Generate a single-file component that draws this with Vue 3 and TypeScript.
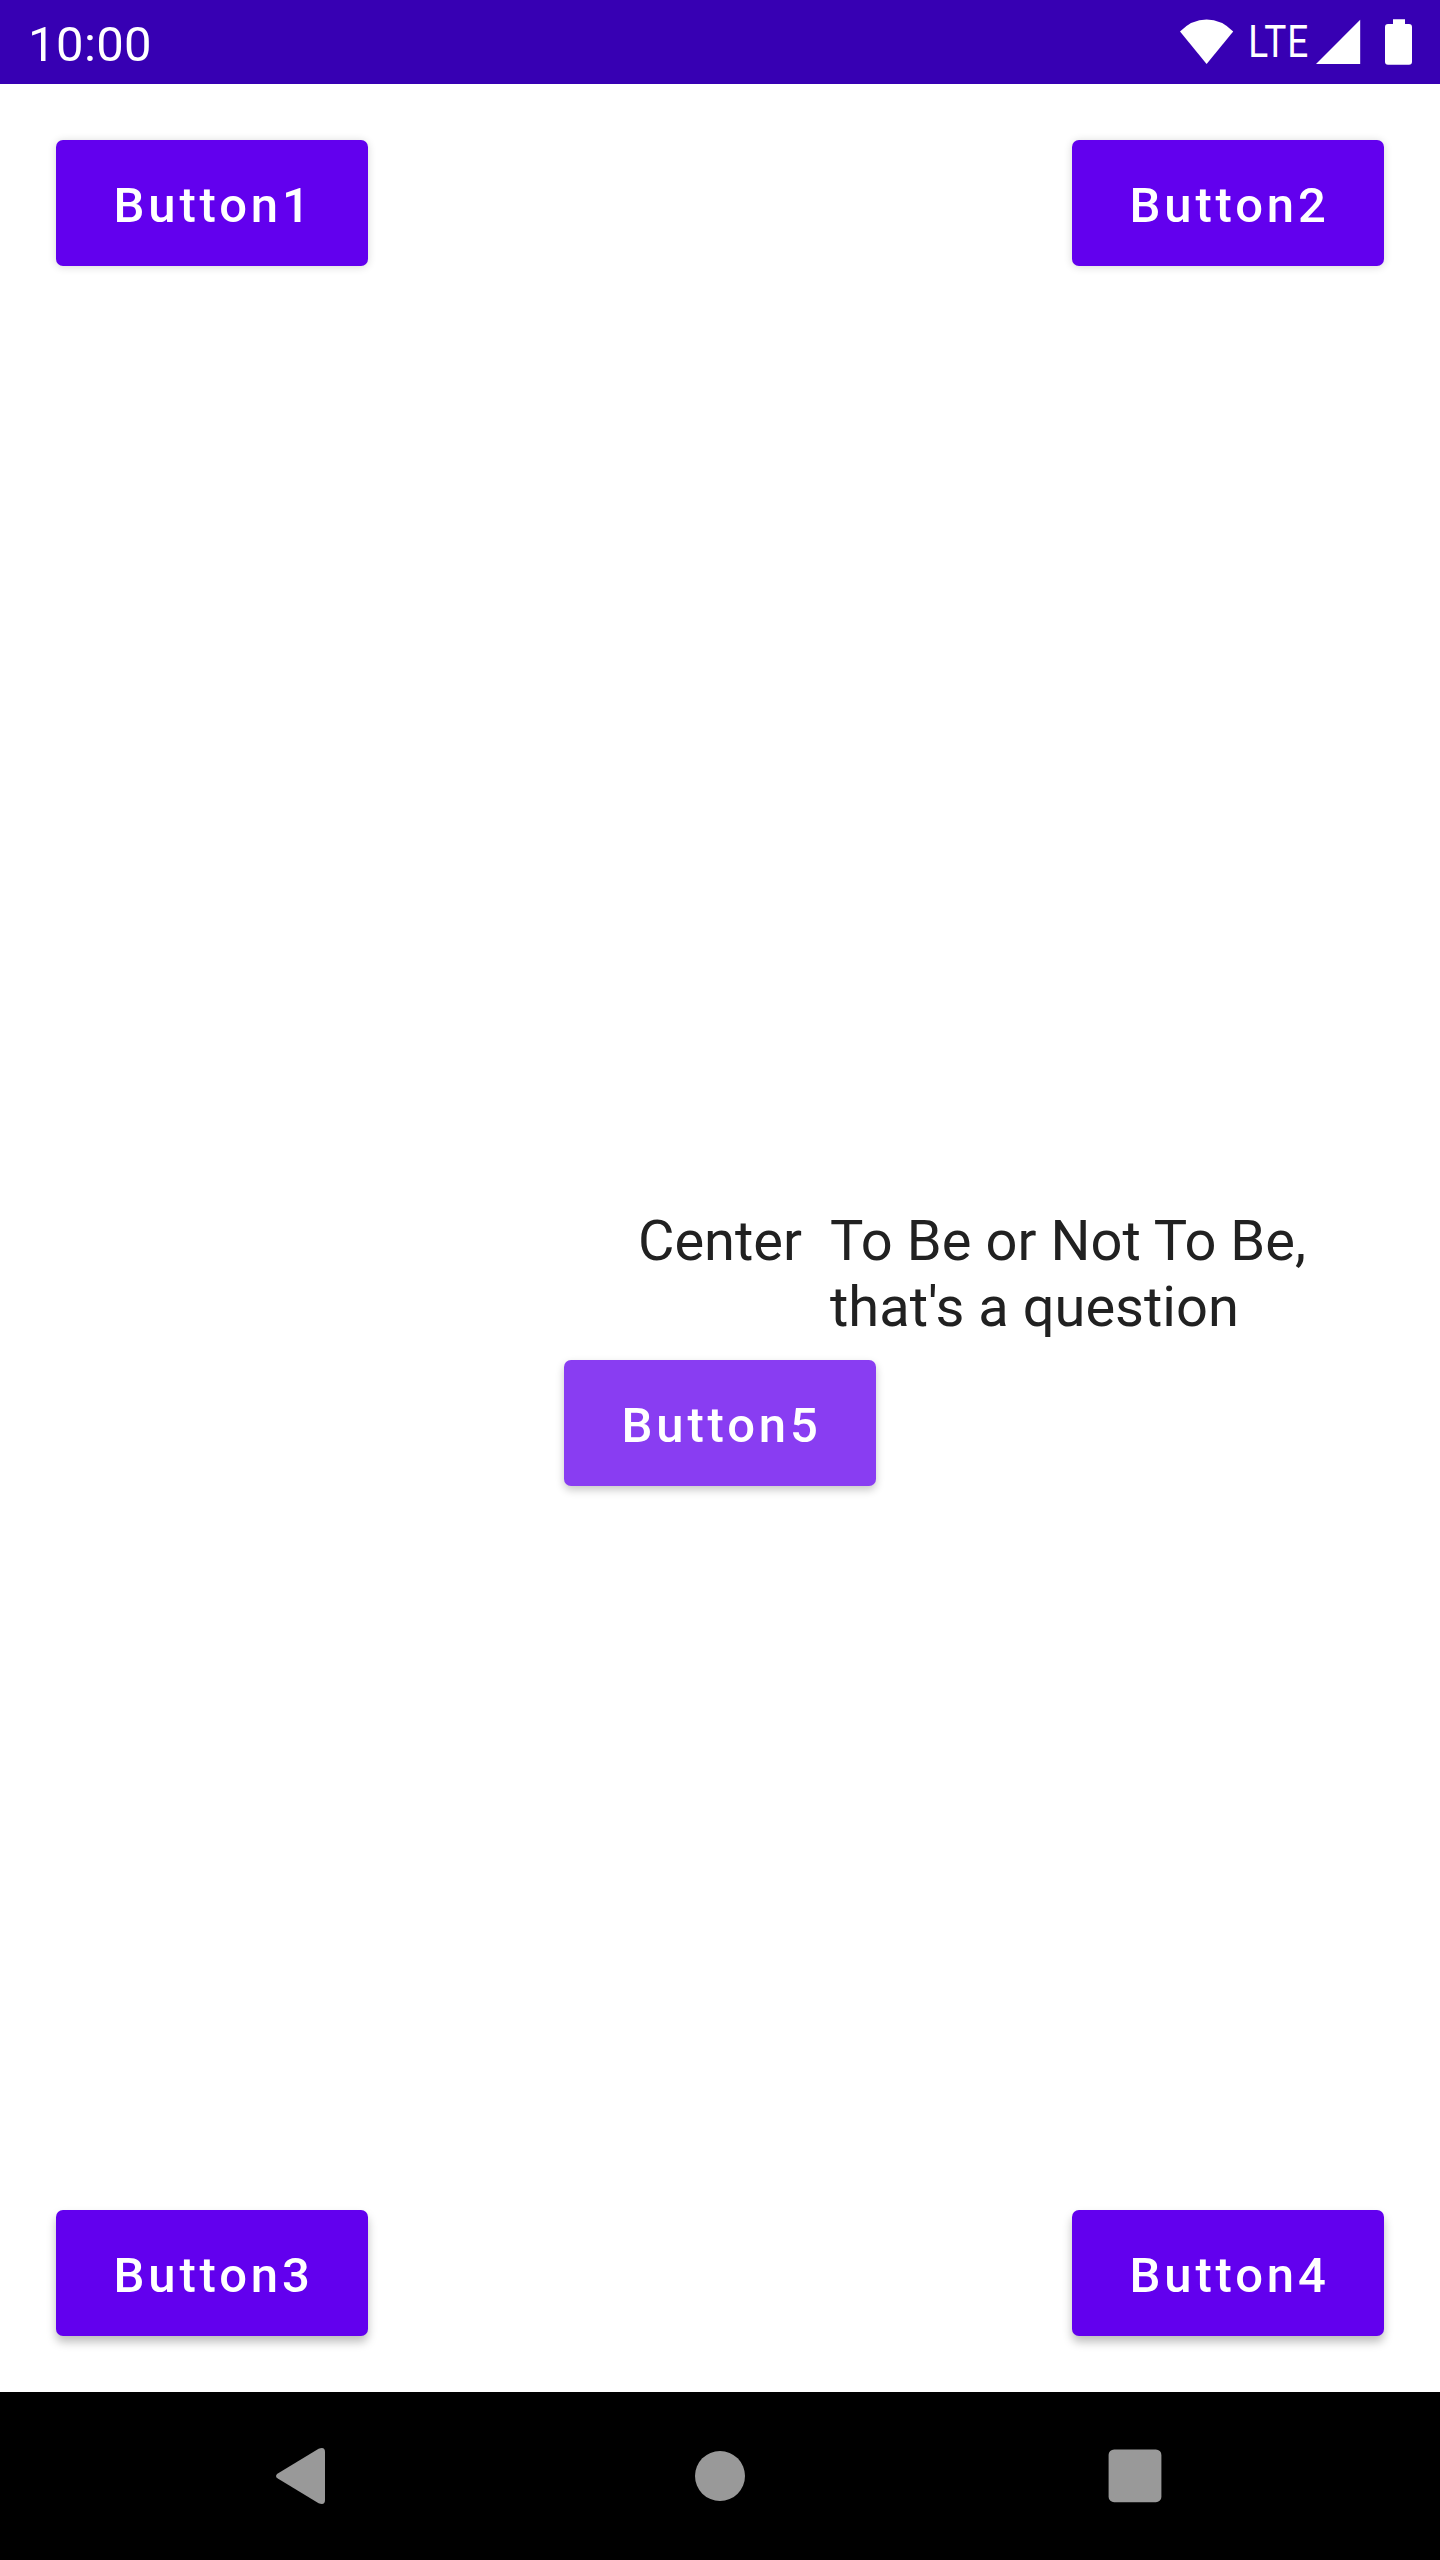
<script setup lang="ts">
interface Action {
  label: string
  tone: string
}

const topActions: Action[] = [
  { label: 'Button1', tone: 'high' },
  { label: 'Button2', tone: 'high' },
]
const bottomActions: Action[] = [
  { label: 'Button3', tone: 'low' },
  { label: 'Button4', tone: 'low' },
]
</script>

<template>
  <div class="screen">
    <header class="status">
      <span class="clock">10:00</span>
      <div class="indicators">
        <svg class="wifi" width="54" height="46" viewBox="0 0 54 46">
          <path d="M0 12.6Q11.8 0.6 26.6 0.6T53.2 12.6L26.6 45Z" fill="#fff" />
        </svg>
        <svg class="lte" width="68" height="65" viewBox="-6 -9 68 65">
          <text transform="translate(0 38) scale(0.84 1)" x="-3.2 15.7 43.2" y="0">LTE</text>
        </svg>
        <svg class="signal" width="45" height="46" viewBox="0 0 45 46">
          <path d="M44.2 0.8V45H0Z" fill="#fff" />
        </svg>
        <svg class="battery" width="27" height="46" viewBox="0 0 27 46">
          <path d="M8 0.3H20V5H24Q27 5 27 8V42.7Q27 45.7 24 45.7H3Q0 45.7 0 42.7V8Q0 5 3 5H8Z" fill="#fff" />
        </svg>
      </div>
    </header>

    <main class="content">
      <div class="row">
        <button v-for="a in topActions" :key="a.label" class="btn" :class="a.tone">{{ a.label }}</button>
      </div>
      <section class="middle">
        <div class="texts">
          <span class="center">Center</span>
          <p class="quote"><span class="line">To Be or Not To Be,</span><br />that's a question</p>
        </div>
        <button class="btn faded">Button5</button>
      </section>
      <div class="row">
        <button v-for="a in bottomActions" :key="a.label" class="btn" :class="a.tone">{{ a.label }}</button>
      </div>
    </main>

    <nav class="nav">
      <svg width="66" height="66" viewBox="0 0 66 66">
        <path d="M10.8 30.4L51.6 5.7Q58 3.2 58 9V57Q58 62.8 51.6 60.3L10.8 35.6Q7.2 33 10.8 30.4Z" fill="#999" />
      </svg>
      <svg width="66" height="66" viewBox="0 0 66 66">
        <circle cx="33" cy="33" r="25" fill="#999" />
      </svg>
      <svg width="66" height="66" viewBox="0 0 66 66">
        <rect x="1.6" y="6.4" width="52.8" height="52.8" rx="5.5" fill="#999" />
      </svg>
    </nav>
  </div>
</template>

<style>
body {
  margin: 0;
}
</style>

<style scoped>
.screen {
  width: 1440px;
  height: 2560px;
  display: flex;
  flex-direction: column;
  background: #fff;
  font-family: Roboto, sans-serif;
  overflow: hidden;
}
.status {
  height: 84px;
  flex: none;
  box-sizing: border-box;
  padding: 0 28px;
  display: flex;
  justify-content: space-between;
  background: #3700b3;
  color: #fff;
}
.clock {
  font-size: 49px;
  line-height: 89px;
  letter-spacing: 0.4px;
}
.indicators {
  display: flex;
  align-items: flex-start;
  padding-top: 19px;
}
.indicators svg {
  display: block;
}
.indicators .lte {
  margin: -9px -2px 0 11px;
  overflow: visible;
}
.lte text {
  font-family: Roboto, sans-serif;
  font-size: 44px;
  fill: #fff;
}
.signal {
  margin-left: 4.5px;
}
.battery {
  margin-left: 24.5px;
}
.content {
  flex: 1;
  display: flex;
  flex-direction: column;
  padding: 56px;
}
.row {
  display: flex;
  justify-content: space-between;
}
.btn {
  width: 312px;
  height: 126px;
  padding: 4px 0 0 57.5px;
  border: 0;
  border-radius: 7px;
  background: #6200ee;
  color: #fff;
  font-family: Roboto, sans-serif;
  font-size: 49px;
  font-weight: 500;
  letter-spacing: 3.85px;
  text-align: left;
  white-space: nowrap;
}
.high {
  box-shadow: 0 1px 9px rgba(0, 0, 0, 0.16);
}
.low {
  box-shadow: 0 6px 10px rgba(0, 0, 0, 0.26);
}
.faded {
  background: #893df2;
  box-shadow: 0 4px 9px rgba(0, 0, 0, 0.22);
}
.middle {
  flex: 1;
  padding-top: 942px;
  display: flex;
  flex-direction: column;
  align-items: center;
}
.texts {
  width: 100%;
  display: grid;
  grid-template-columns: 1fr auto 1fr;
  column-gap: 28px;
  margin-bottom: 20px;
  font-size: 56px;
  line-height: 66px;
  color: #212121;
}
.center {
  grid-column: 2;
}
.quote {
  margin: 0;
  white-space: nowrap;
}
.line {
  letter-spacing: 0.06px;
}
.nav {
  height: 168px;
  flex: none;
  box-sizing: border-box;
  padding: 0 267px;
  display: flex;
  justify-content: space-between;
  align-items: center;
  background: #000;
}
</style>
